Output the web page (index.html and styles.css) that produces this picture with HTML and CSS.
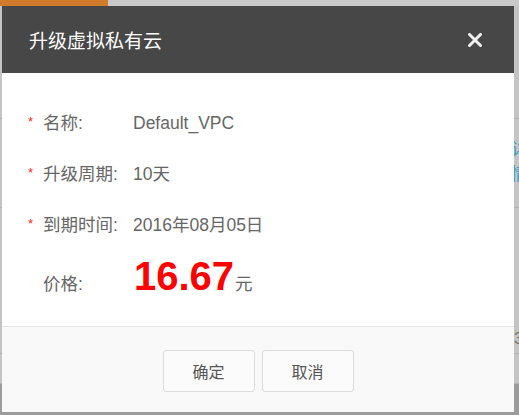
FILE: index.html
```html
<!DOCTYPE html>
<html lang="zh-CN">
<head>
    <meta charset="UTF-8">
    <title>升级虚拟私有云</title>
    <link rel="stylesheet" href="styles.css">
</head>
<body>
    <div class="page">
        <div class="tabs">
            <div class="tab tab-active"></div>
            <div class="tab"></div>
        </div>
        <div class="list">
            <div class="list-row row-a"></div>
            <div class="list-row row-b"><span class="link">详情</span></div>
            <div class="list-row row-c"><span class="num">3</span></div>
            <div class="list-row row-d"></div>
        </div>
        <div class="page-foot"></div>
    </div>

    <div class="modal">
        <div class="modal-header">
            <h2 class="modal-title">升级虚拟私有云</h2>
            <svg class="close" width="14" height="14" viewBox="0 0 14 14">
                <path d="M1.5 1.5 L12.5 12.5 M12.5 1.5 L1.5 12.5" stroke="#f0f0f0" stroke-width="3" stroke-linecap="square"/>
            </svg>
        </div>
        <div class="modal-body">
            <div class="form-row">
                <span class="star">*</span>
                <span class="label">名称:</span>
                <span class="value">Default_VPC</span>
            </div>
            <div class="form-row">
                <span class="star">*</span>
                <span class="label">升级周期:</span>
                <span class="value">10天</span>
            </div>
            <div class="form-row">
                <span class="star">*</span>
                <span class="label">到期时间:</span>
                <span class="value">2016年08月05日</span>
            </div>
            <div class="form-row">
                <span class="star"></span>
                <span class="label">价格:</span>
                <span class="price">16.67</span><span class="unit">元</span>
            </div>
        </div>
        <div class="modal-footer">
            <button class="btn">确定</button>
            <button class="btn">取消</button>
        </div>
    </div>
</body>
</html>
```

FILE: styles.css
```css
body {
    margin: 0;
    font-family: "Liberation Sans", "Noto Sans CJK SC", sans-serif;
    background-color: #c4c4c4;
}
.page {
    height: 415px;
    overflow: hidden;
    background-color: #c4c4c4;
}
.tabs {
    display: flex;
    height: 6px;
}
.tab {
    flex: 1;
    background-color: #c9c9c9;
}
.tab-active {
    flex: 0 0 108px;
    background-color: #d17b2b;
}
.list-row {
    box-sizing: border-box;
    border-bottom: 1px solid #b2b2b2;
    position: relative;
}
.row-a { height: 113px; }
.row-b { height: 89px; }
.row-c { height: 146px; }
.row-d { height: 30px; }
.link {
    position: absolute;
    left: 511px;
    top: 16px;
    font-size: 17px;
    color: #3b9bd0;
}
.num {
    position: absolute;
    left: 514px;
    top: 122px;
    font-size: 16px;
    color: #777;
}
.page-foot {
    height: 40px;
    background-color: #9c9c9c;
}

/* dialog */
.modal {
    position: absolute;
    left: 2px;
    top: 6px;
    width: 512px;
    height: 406px;
    background-color: #fff;
}
.modal-header {
    display: flex;
    align-items: center;
    justify-content: space-between;
    height: 67px;
    padding: 0 32px 0 27px;
    background-color: #474747;
}
.modal-title {
    margin: 0;
    font-size: 19px;
    font-weight: normal;
    color: #fff;
}
.close {
    display: block;
}
.modal-body {
    box-sizing: border-box;
    height: 253px;
    padding: 25px 0 0 26px;
}
.form-row {
    display: flex;
    align-items: baseline;
    height: 51px;
    line-height: 51px;
    font-size: 17.5px;
    color: #666;
}
.star {
    width: 15px;
    flex-shrink: 0;
    color: #f22;
    font-size: 13px;
    position: relative;
    top: -3px;
}
.label {
    width: 90px;
    flex-shrink: 0;
}
.price {
    font-size: 40px;
    font-weight: bold;
    color: #f00;
    margin-left: 1px;
}
.unit {
    margin-left: 1px;
}
.modal-footer {
    box-sizing: border-box;
    height: 86px;
    border-top: 1px solid #e4e4e4;
    background-color: #f9f9f9;
    display: flex;
    justify-content: center;
    gap: 7px;
    padding-top: 23px;
}
.btn {
    width: 92px;
    height: 42px;
    border: 1px solid #dcdcdc;
    border-radius: 3px;
    background-color: #fbfbfb;
    font-family: "Liberation Sans", "Noto Sans CJK SC", sans-serif;
    font-size: 16px;
    color: #555;
    cursor: pointer;
}
```
